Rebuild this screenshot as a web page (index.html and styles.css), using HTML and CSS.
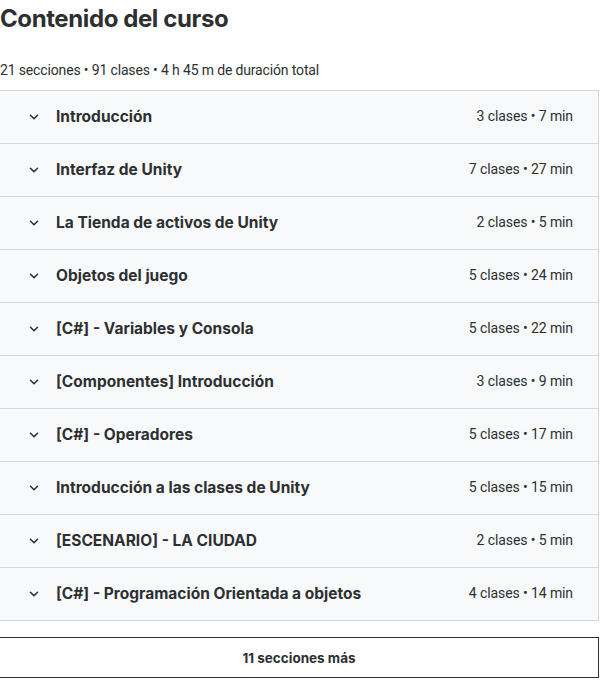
FILE: index.html
```html
<!DOCTYPE html>
<html lang="es">
<head>
    <meta charset="UTF-8">
    <meta name="viewport" content="width=device-width, initial-scale=1.0">
    <title>Contenido del curso</title>
    <link rel="stylesheet" href="styles.css">
</head>
<body>
    <div class="course-content">
        <h2>Contenido del curso</h2>

        <div class="summary">21 secciones • 91 clases • 4 h 45 m de duración total</div>

        <div class="sections">
            <div class="section-row">
                <svg class="chevron" viewBox="0 0 24 24"><path d="M6 9l6 6 6-6"/></svg>
                <span class="section-title">Introducción</span>
                <span class="section-meta">3 clases • 7 min</span>
            </div>
            <div class="section-row">
                <svg class="chevron" viewBox="0 0 24 24"><path d="M6 9l6 6 6-6"/></svg>
                <span class="section-title">Interfaz de Unity</span>
                <span class="section-meta">7 clases • 27 min</span>
            </div>
            <div class="section-row">
                <svg class="chevron" viewBox="0 0 24 24"><path d="M6 9l6 6 6-6"/></svg>
                <span class="section-title">La Tienda de activos de Unity</span>
                <span class="section-meta">2 clases • 5 min</span>
            </div>
            <div class="section-row">
                <svg class="chevron" viewBox="0 0 24 24"><path d="M6 9l6 6 6-6"/></svg>
                <span class="section-title">Objetos del juego</span>
                <span class="section-meta">5 clases • 24 min</span>
            </div>
            <div class="section-row">
                <svg class="chevron" viewBox="0 0 24 24"><path d="M6 9l6 6 6-6"/></svg>
                <span class="section-title">[C#] - Variables y Consola</span>
                <span class="section-meta">5 clases • 22 min</span>
            </div>
            <div class="section-row">
                <svg class="chevron" viewBox="0 0 24 24"><path d="M6 9l6 6 6-6"/></svg>
                <span class="section-title">[Componentes] Introducción</span>
                <span class="section-meta">3 clases • 9 min</span>
            </div>
            <div class="section-row">
                <svg class="chevron" viewBox="0 0 24 24"><path d="M6 9l6 6 6-6"/></svg>
                <span class="section-title">[C#] - Operadores</span>
                <span class="section-meta">5 clases • 17 min</span>
            </div>
            <div class="section-row">
                <svg class="chevron" viewBox="0 0 24 24"><path d="M6 9l6 6 6-6"/></svg>
                <span class="section-title">Introducción a las clases de Unity</span>
                <span class="section-meta">5 clases • 15 min</span>
            </div>
            <div class="section-row">
                <svg class="chevron" viewBox="0 0 24 24"><path d="M6 9l6 6 6-6"/></svg>
                <span class="section-title">[ESCENARIO] - LA CIUDAD</span>
                <span class="section-meta">2 clases • 5 min</span>
            </div>
            <div class="section-row">
                <svg class="chevron" viewBox="0 0 24 24"><path d="M6 9l6 6 6-6"/></svg>
                <span class="section-title">[C#] - Programación Orientada a objetos</span>
                <span class="section-meta">4 clases • 14 min</span>
            </div>
        </div>

        <button class="more-button">11 secciones más</button>
    </div>
</body>
</html>
```

FILE: styles.css
```css
:root {
    --text-primary: #2d2f31;
    --row-bg: #f7f9fa;
    --border-light: #d1d7dc;
    --border-dark: #2d2f31;
}

body {
    font-family: Roboto, 'Liberation Sans', Arial, sans-serif;
    color: var(--text-primary);
    background-color: #ffffff;
    margin: 0;
}

.course-content {
    width: 600px;
    margin-left: -1px;
}

h2 {
    font-family: Inter, Roboto, sans-serif;
    font-size: 24px;
    font-weight: 700;
    line-height: 38px;
    margin: 0;
    padding-left: 1px;
    letter-spacing: -0.4px;
}

.summary {
    font-size: 14px;
    line-height: 20px;
    margin-top: 22px;
    margin-bottom: 10px;
    padding-left: 1px;
    letter-spacing: -0.15px;
}

.sections {
    border: 1px solid var(--border-light);
    border-bottom: none;
}

.section-row {
    display: flex;
    align-items: center;
    height: 53px;
    padding: 0 25px 1px 28px;
    box-sizing: border-box;
    background-color: var(--row-bg);
    border-bottom: 1px solid var(--border-light);
}

.chevron {
    width: 14px;
    height: 14px;
    margin-left: -1px;
    fill: none;
    stroke: var(--text-primary);
    stroke-width: 2.6;
    stroke-linecap: round;
    stroke-linejoin: round;
    flex-shrink: 0;
}

.section-title {
    font-family: Inter, Roboto, sans-serif;
    font-size: 15.5px;
    font-weight: 700;
    margin-left: 15px;
    flex: 1;
}

.section-meta {
    font-size: 14px;
    letter-spacing: -0.1px;
    margin-top: -1px;
}

.more-button {
    display: block;
    width: 100%;
    height: 41px;
    margin-top: 16px;
    background-color: #ffffff;
    border: 1px solid var(--border-dark);
    color: var(--text-primary);
    font-family: Inter, Roboto, sans-serif;
    font-size: 13.5px;
    font-weight: 700;
    cursor: pointer;
}
```
